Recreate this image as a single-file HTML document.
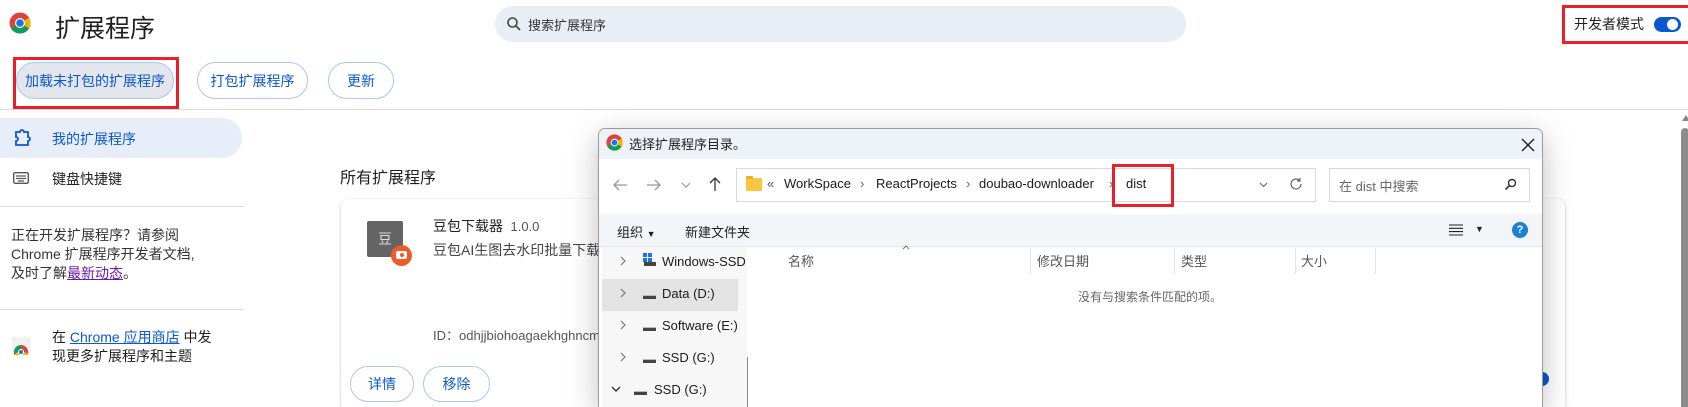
<!DOCTYPE html>
<html style="width:1688px;height:407px;overflow:hidden"><head><meta charset="utf-8"><style>
*{margin:0;padding:0;box-sizing:border-box}
body{width:1688px;height:407px;overflow:hidden;background:#fff;position:relative;font-family:"Liberation Sans","Noto Sans CJK SC",sans-serif;color:#1f1f1f}
.a{position:absolute;white-space:nowrap}
.btn{position:absolute;height:37px;border:1px solid #a8c7fa;border-radius:19px;color:#0b57d0;font-size:14px;display:flex;align-items:center;justify-content:center;background:#fff}
.red{position:absolute;border:3px solid #e8202a}
.nav{font-size:13px;color:#1a1a1a}
.chev{position:absolute}
</style></head><body>

<!-- header -->
<svg class="a" style="left:9px;top:12px" width="22" height="22" viewBox="0 0 22 22">
<circle cx="11" cy="11" r="10.5" fill="#db4437"/>
<path d="M11 11 L20.1 16.25 A10.5 10.5 0 0 1 1.9 16.25 Z" fill="#0f9d58"/>
<path d="M11 11 L20.1 5.75 A10.5 10.5 0 0 1 20.1 16.25 Z" fill="#f4b400"/>
<circle cx="11" cy="11" r="5" fill="#fff"/><circle cx="11" cy="11" r="3.8" fill="#1a73e8"/></svg>
<div class="a" style="left:55px;top:9px;font-size:25px">扩展程序</div>
<div class="a" style="left:495px;top:6px;width:691px;height:36px;border-radius:18px;background:#e9eef6"></div>
<svg class="a" style="left:506px;top:16px" width="16" height="16" viewBox="0 0 16 16"><circle cx="6.5" cy="6.5" r="4.5" fill="none" stroke="#444" stroke-width="1.6"/><path d="M10 10 L14 14" stroke="#444" stroke-width="1.8"/></svg>
<div class="a" style="left:528px;top:15px;font-size:13px;color:#333">搜索扩展程序</div>
<div class="red" style="left:1562px;top:5px;width:130px;height:39px"></div>
<div class="a" style="left:1574px;top:14px;font-size:14px">开发者模式</div>
<div class="a" style="left:1654px;top:17px;width:27px;height:15px;border-radius:8px;background:#0b57d0"></div>
<div class="a" style="left:1667px;top:19px;width:11px;height:11px;border-radius:50%;background:#fff"></div>

<div class="red" style="left:13px;top:57px;width:166px;height:52px"></div>
<div class="btn" style="left:16px;top:62px;width:158px;background:#e3e6ec">加载未打包的扩展程序</div>
<div class="btn" style="left:197px;top:62px;width:111px">打包扩展程序</div>
<div class="btn" style="left:328px;top:62px;width:66px">更新</div>
<div class="a" style="left:0;top:109px;width:1688px;height:1px;background:#dadce0"></div>

<!-- sidebar -->
<div class="a" style="left:0;top:118px;width:242px;height:40px;border-radius:0 20px 20px 0;background:#e8eef9"></div>
<svg class="a" style="left:13px;top:129px" width="18" height="18" viewBox="0 0 18 18"><path d="M3 3h4a2 2 0 0 1 4 0h4v5a2 2 0 0 1 0 4v4H3v-4a2 2 0 0 0 0-4z" fill="none" stroke="#0b57d0" stroke-width="1.8"/></svg>
<div class="a" style="left:52px;top:129px;font-size:14px;color:#0b57d0">我的扩展程序</div>
<svg class="a" style="left:13px;top:172px" width="16" height="12" viewBox="0 0 16 12"><rect x="0.7" y="0.7" width="14.6" height="10.6" rx="1.5" fill="none" stroke="#555" stroke-width="1.4"/><path d="M3 4h10M3 6.5h10M5 9h6" stroke="#555" stroke-width="1.2"/></svg>
<div class="a" style="left:52px;top:169px;font-size:14px">键盘快捷键</div>
<div class="a" style="left:0;top:206px;width:244px;height:1px;background:#dadce0"></div>
<div class="a" style="left:11px;top:226px;font-size:14px;line-height:19px;color:#333">正在开发扩展程序？请参阅<br>Chrome 扩展程序开发者文档,<br>及时了解<span style="color:#681da8;text-decoration:underline">最新动态</span>。</div>
<div class="a" style="left:0;top:309px;width:244px;height:1px;background:#dadce0"></div>
<div class="a" style="left:12px;top:337px;width:18px;height:18px;background:#f1f1f1"></div>
<div class="a" style="left:14px;top:345px;width:14px;height:10px;border-radius:7px 7px 0 0;background:conic-gradient(#db4437 0 33%,#f4b400 0 66%,#0f9d58 0)"></div>
<div class="a" style="left:18px;top:349px;width:6px;height:6px;border-radius:50%;background:#1a73e8;border:1px solid #fff"></div>
<div class="a" style="left:52px;top:328px;font-size:14px;line-height:19px">在 <span style="color:#0b57d0;text-decoration:underline">Chrome 应用商店</span> 中发<br>现更多扩展程序和主题</div>

<!-- main -->
<div class="a" style="left:340px;top:164px;font-size:16px">所有扩展程序</div>
<div class="a" style="left:341px;top:199px;width:1224px;height:208px;border-radius:8px 8px 0 0;background:#fff;box-shadow:0 1px 3px rgba(0,0,0,.25)"></div>
<div class="a" style="left:367px;top:221px;width:36px;height:36px;border-radius:2px;background:#646464;color:#ddd;font-size:14px;text-align:center;line-height:36px">豆</div>
<div class="a" style="left:391px;top:245px;width:21px;height:21px;border-radius:50%;background:#f05a28"></div>
<div class="a" style="left:396px;top:251px;width:11px;height:8px;border-radius:2px;background:#fff"></div>
<div class="a" style="left:400px;top:253px;width:4px;height:4px;border-radius:50%;background:#f05a28"></div>
<div class="a" style="left:433px;top:216px;font-size:14px">豆包下载器 <span style="color:#555;font-size:13px">&nbsp;1.0.0</span></div>
<div class="a" style="left:433px;top:240px;font-size:14px;color:#444">豆包AI生图去水印批量下载!</div>
<div class="a" style="left:433px;top:325px;font-size:13px;color:#555">ID：odhjjbiohoagaekhghncm</div>
<div class="btn" style="left:350px;top:366px;width:64px;height:36px">详情</div>
<div class="btn" style="left:423px;top:366px;width:67px;height:36px">移除</div>
<div class="a" style="left:1535px;top:372px;width:14px;height:14px;border-radius:50%;background:#0b57d0"></div>

<!-- page scrollbar -->
<div class="a" style="left:1682px;top:115px;width:0;height:0;border-left:4px solid transparent;border-right:4px solid transparent;border-bottom:6px solid #888"></div>
<div class="a" style="left:1681px;top:128px;width:8px;height:279px;border-radius:4px 4px 0 0;background:#8c8c8c"></div>

<!-- dialog -->
<div class="a" style="left:598px;top:128px;width:945px;height:279px;border:1px solid #9a9a9a;border-bottom:none;border-radius:7px 7px 0 0;background:#fff;box-shadow:0 8px 30px rgba(0,0,0,.25);overflow:hidden">
 <div class="a" style="left:0;top:0;width:945px;height:30px;background:#eef2f9"></div>
 <div class="a" style="left:0;top:85px;width:945px;height:33px;background:#f3f5f9;border-bottom:1px solid #e5e5e5"></div>
 <div class="a" style="left:3px;top:118px;width:145px;height:200px;background:#f7f7f7"></div>
 <div class="a" style="left:3px;top:150px;width:136px;height:32px;background:#e3e3e3"></div>
 <div class="a" style="left:148px;top:228px;width:1px;height:90px;background:#888"></div>
</div>
<svg class="a" style="left:606px;top:134px" width="17" height="17" viewBox="0 0 22 22">
<circle cx="11" cy="11" r="10.5" fill="#db4437"/>
<path d="M11 11 L20.1 16.25 A10.5 10.5 0 0 1 1.9 16.25 Z" fill="#0f9d58"/>
<path d="M11 11 L20.1 5.75 A10.5 10.5 0 0 1 20.1 16.25 Z" fill="#f4b400"/>
<circle cx="11" cy="11" r="5" fill="#fff"/><circle cx="11" cy="11" r="3.8" fill="#1a73e8"/></svg>
<div class="a" style="left:629px;top:134px;font-size:13px">选择扩展程序目录。</div>
<svg class="a" style="left:1521px;top:138px" width="14" height="14" viewBox="0 0 14 14"><path d="M1 1L13 13M13 1L1 13" stroke="#222" stroke-width="1.4"/></svg>

<!-- nav arrows -->
<svg class="a" style="left:612px;top:178px" width="16" height="14" viewBox="0 0 16 14"><path d="M15 7H2M7 2L2 7l5 5" fill="none" stroke="#999" stroke-width="1.3"/></svg>
<svg class="a" style="left:646px;top:178px" width="16" height="14" viewBox="0 0 16 14"><path d="M1 7h13M9 2l5 5-5 5" fill="none" stroke="#999" stroke-width="1.3"/></svg>
<svg class="a" style="left:681px;top:182px" width="10" height="6" viewBox="0 0 10 6"><path d="M1 1l4 4 4-4" fill="none" stroke="#999" stroke-width="1.2"/></svg>
<svg class="a" style="left:708px;top:176px" width="14" height="16" viewBox="0 0 14 16"><path d="M7 15V2M2 7l5-5 5 5" fill="none" stroke="#333" stroke-width="1.3"/></svg>
<div class="a" style="left:736px;top:168px;width:580px;height:34px;border:1px solid #d9d9d9;background:#fff"></div>
<div class="a" style="left:746px;top:178px;width:16px;height:13px;background:#f8c63f;border-radius:1px"></div>
<div class="a" style="left:746px;top:176px;width:7px;height:3px;background:#e9b22c"></div>
<div class="a nav" style="left:767px;top:176px;color:#555">«</div>
<div class="a nav" style="left:784px;top:176px">WorkSpace</div>
<div class="a nav" style="left:860px;top:176px;color:#666">›</div>
<div class="a nav" style="left:876px;top:176px">ReactProjects</div>
<div class="a nav" style="left:966px;top:176px;color:#666">›</div>
<div class="a nav" style="left:979px;top:176px">doubao-downloader</div>
<div class="a nav" style="left:1109px;top:176px;color:#666">›</div>
<div class="a nav" style="left:1126px;top:176px">dist</div>
<div class="red" style="left:1112px;top:164px;width:62px;height:43px"></div>
<svg class="a" style="left:1259px;top:182px" width="9" height="6" viewBox="0 0 9 6"><path d="M1 1l3.5 3.5L8 1" fill="none" stroke="#666" stroke-width="1.1"/></svg>
<svg class="a" style="left:1289px;top:177px" width="14" height="14" viewBox="0 0 14 14"><path d="M12 7A5 5 0 1 1 10.5 3.4M11 1v3h-3" fill="none" stroke="#666" stroke-width="1.2"/></svg>
<div class="a" style="left:1329px;top:168px;width:201px;height:34px;border:1px solid #d9d9d9;background:#fff"></div>
<div class="a" style="left:1339px;top:176px;font-size:13px;color:#666">在 dist 中搜索</div>
<svg class="a" style="left:1504px;top:178px" width="13" height="13" viewBox="0 0 13 13"><circle cx="8" cy="5" r="3.5" fill="none" stroke="#333" stroke-width="1.4"/><path d="M5.5 7.5L1.5 11.5" stroke="#333" stroke-width="1.6"/></svg>

<!-- toolbar -->
<div class="a" style="left:617px;top:222px;font-size:13px">组织 <span style="font-size:9px">▼</span></div>
<div class="a" style="left:685px;top:222px;font-size:13px">新建文件夹</div>
<svg class="a" style="left:1449px;top:224px" width="14" height="12" viewBox="0 0 14 12"><path d="M0 1h14M0 4.3h14M0 7.6h14M0 11h14" stroke="#222" stroke-width="1.1"/></svg>
<div class="a" style="left:1475px;top:224px;font-size:9px;color:#223">▼</div>
<div class="a" style="left:1512px;top:222px;width:16px;height:16px;border-radius:50%;background:#1a7fd6;color:#fff;font-size:11px;font-weight:bold;text-align:center;line-height:16px">?</div>

<!-- nav pane -->
<svg class="chev" style="left:620px;top:256px" width="6" height="10" viewBox="0 0 6 10"><path d="M1 1l4 4-4 4" fill="none" stroke="#777" stroke-width="1.2"/></svg>
<div class="a" style="left:643px;top:253px;width:4px;height:4px;background:#1a73e8;box-shadow:5px 0 #1a73e8,0 5px #1a73e8,5px 5px #1a73e8"></div>
<div class="a" style="left:644px;top:262px;width:12px;height:4px;background:#444"></div>
<div class="a nav" style="left:662px;top:254px">Windows-SSD</div>
<svg class="chev" style="left:620px;top:288px" width="6" height="10" viewBox="0 0 6 10"><path d="M1 1l4 4-4 4" fill="none" stroke="#777" stroke-width="1.2"/></svg>
<div class="a" style="left:643px;top:295px;width:13px;height:4px;background:#444;border-top:1px solid #bbb"></div>
<div class="a nav" style="left:662px;top:286px">Data (D:)</div>
<svg class="chev" style="left:620px;top:320px" width="6" height="10" viewBox="0 0 6 10"><path d="M1 1l4 4-4 4" fill="none" stroke="#777" stroke-width="1.2"/></svg>
<div class="a" style="left:643px;top:327px;width:13px;height:4px;background:#444;border-top:1px solid #bbb"></div>
<div class="a nav" style="left:662px;top:318px">Software (E:)</div>
<svg class="chev" style="left:620px;top:352px" width="6" height="10" viewBox="0 0 6 10"><path d="M1 1l4 4-4 4" fill="none" stroke="#777" stroke-width="1.2"/></svg>
<div class="a" style="left:643px;top:359px;width:13px;height:4px;background:#444;border-top:1px solid #bbb"></div>
<div class="a nav" style="left:662px;top:350px">SSD (G:)</div>
<svg class="a" style="left:611px;top:386px" width="10" height="6" viewBox="0 0 10 6"><path d="M1 1l4 4 4-4" fill="none" stroke="#333" stroke-width="1.4"/></svg>
<div class="a" style="left:634px;top:391px;width:13px;height:4px;background:#444;border-top:1px solid #bbb"></div>
<div class="a nav" style="left:654px;top:382px">SSD (G:)</div>

<!-- list headers -->
<div class="a" style="left:788px;top:251px;font-size:13px;color:#555">名称</div>
<svg class="a" style="left:902px;top:245px" width="8" height="5" viewBox="0 0 8 5"><path d="M1 4l3-3 3 3" fill="none" stroke="#777" stroke-width="1"/></svg>
<div class="a" style="left:1030px;top:248px;width:1px;height:26px;background:#e5e5e5"></div>
<div class="a" style="left:1037px;top:251px;font-size:13px;color:#555">修改日期</div>
<div class="a" style="left:1174px;top:248px;width:1px;height:26px;background:#e5e5e5"></div>
<div class="a" style="left:1181px;top:251px;font-size:13px;color:#555">类型</div>
<div class="a" style="left:1295px;top:248px;width:1px;height:26px;background:#e5e5e5"></div>
<div class="a" style="left:1301px;top:251px;font-size:13px;color:#555">大小</div>
<div class="a" style="left:1375px;top:248px;width:1px;height:26px;background:#e5e5e5"></div>
<div class="a" style="left:1078px;top:288px;font-size:12px;color:#666">没有与搜索条件匹配的项。</div>
</body></html>
